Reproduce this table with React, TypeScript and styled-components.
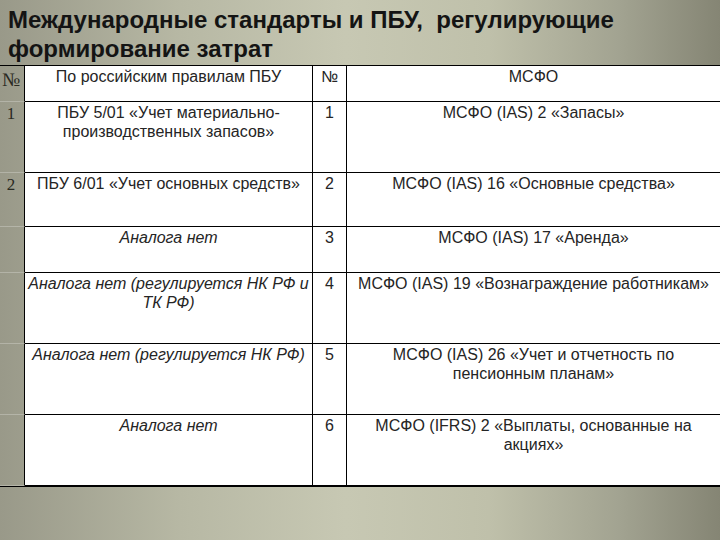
import styled, { createGlobalStyle } from "styled-components";

const Global = createGlobalStyle`
  html, body { margin: 0; padding: 0; }
  body {
    width: 720px;
    height: 540px;
    overflow: hidden;
    font-family: "Liberation Sans", Arial, sans-serif;
  }
`;

const Slide = styled.div`
  width: 720px;
  height: 540px;
  background: linear-gradient(90deg, #999989 0%, #b7b8a4 25%, #c7c8b3 48%, #bfc0aa 68%, #a2a391 86%, #858574 100%);
  display: flex;
  flex-direction: column;
`;

const Title = styled.h1`
  margin: 0;
  padding: 5px 0 0 8px;
  height: 59px;
  box-sizing: border-box;
  font-size: 24px;
  line-height: 29px;
  font-weight: bold;
  color: #141414;
  white-space: pre;
`;

const Table = styled.div`
  display: grid;
  grid-template-columns: 25px 288px 34px 373px;
  border-top: 1.5px solid #000;
  border-bottom: 1.5px solid #000;
  margin-top: 6px;
`;

const Cell = styled.div<{ $h: number; $italic?: boolean; $side?: boolean; $last?: boolean }>`
  height: ${(p) => p.$h}px;
  box-sizing: border-box;
  background: ${(p) => (p.$side ? "transparent" : "#fff")};
  border-right: ${(p) => (p.$last ? "none" : "1.5px solid #000")};
  border-bottom: ${(p) => (p.$side ? "1px solid rgba(255,255,255,0.25)" : "1.5px solid #000")};
  padding: 1px 2px 0;
  font-size: 16px;
  line-height: 19px;
  color: #252525;
  text-align: center;
  font-style: ${(p) => (p.$italic ? "italic" : "normal")};
  white-space: nowrap;
`;

const SideNum = styled.div<{ $big?: boolean }>`
  font-family: "Liberation Serif", "Times New Roman", serif;
  font-size: ${(p) => (p.$big ? 19 : 17)}px;
  line-height: 19px;
  color: #2a2a22;
  text-align: center;
  padding-top: ${(p) => (p.$big ? 3 : 1)}px;
  margin-left: -2px;
`;

type Row = {
  h: number;
  side: string;
  left: string[];
  italic?: boolean;
  num: string;
  right: string[];
};

const rows: Row[] = [
  { h: 36, side: "№", left: ["По российским правилам ПБУ"], num: "№", right: ["МСФО"] },
  { h: 71, side: "1", left: ["ПБУ 5/01 «Учет материально-", "производственных запасов»"], num: "1", right: ["МСФО (IAS) 2 «Запасы»"] },
  { h: 54, side: "2", left: ["ПБУ 6/01 «Учет основных средств»"], num: "2", right: ["МСФО (IAS) 16 «Основные средства»"] },
  { h: 46, side: "", left: ["Аналога нет"], italic: true, num: "3", right: ["МСФО (IAS) 17 «Аренда»"] },
  { h: 71, side: "", left: ["Аналога нет (регулируется НК РФ и", "ТК РФ)"], italic: true, num: "4", right: ["МСФО (IAS) 19 «Вознаграждение работникам»"] },
  { h: 71, side: "", left: ["Аналога нет (регулируется НК РФ)"], italic: true, num: "5", right: ["МСФО (IAS) 26 «Учет и отчетность по", "пенсионным планам»"] },
  { h: 71, side: "", left: ["Аналога нет"], italic: true, num: "6", right: ["МСФО (IFRS) 2 «Выплаты, основанные на", "акциях»"] },
];

const Lines = ({ items }: { items: string[] }) => (
  <>
    {items.map((t, i) => (
      <div key={i}>{t}</div>
    ))}
  </>
);

export default function App() {
  return (
    <Slide>
      <Global />
      <Title>{"Международные стандарты и ПБУ,  регулирующие\nформирование затрат"}</Title>
      <Table>
        {rows.map((r, i) => (
          <div key={i} style={{ display: "contents" }}>
            <Cell $h={r.h} $side>
              <SideNum $big={i === 0}>{r.side}</SideNum>
            </Cell>
            <Cell $h={r.h} $italic={r.italic}>
              <Lines items={r.left} />
            </Cell>
            <Cell $h={r.h}>{r.num}</Cell>
            <Cell $h={r.h} $last>
              <Lines items={r.right} />
            </Cell>
          </div>
        ))}
      </Table>
    </Slide>
  );
}
